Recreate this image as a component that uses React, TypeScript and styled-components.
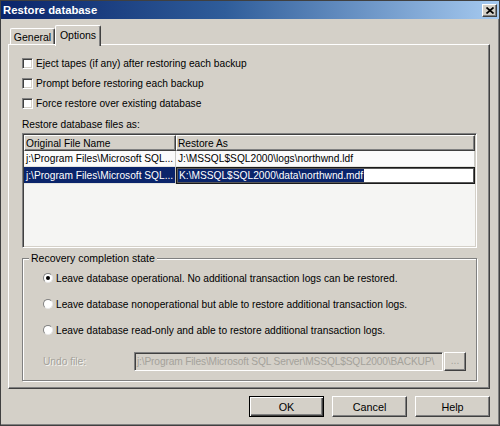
import React from "react";
import styled, { createGlobalStyle } from "styled-components";

const Global = createGlobalStyle`
  html, body { margin: 0; padding: 0; background: #d4d0c8; }
  body {
    font-family: "Liberation Sans", Arial, sans-serif;
    font-size: 10.2px;
    color: #000;
  }
  * { box-sizing: border-box; }
`;

const Window = styled.div`
  width: 500px;
  height: 426px;
  background: #d4d0c8;
  border: 1px solid #404040;
  box-shadow: inset -1px -1px #808080;
  display: flex;
  flex-direction: column;
  overflow: hidden;
`;

const TitleBar = styled.div`
  height: 18px;
  flex: 0 0 18px;
  background: linear-gradient(to right, #0a246a 0%, #2f5d9a 45%, #a6caf0 100%);
  display: flex;
  align-items: center;
  justify-content: space-between;
  padding: 0 2px 0 2px;
  color: #fff;
  font-weight: bold;
  font-size: 11.3px;
`;

const CloseButton = styled.div`
  width: 15px;
  height: 13px;
  background: #d4d0c8;
  border: 1px solid;
  border-color: #fff #404040 #404040 #fff;
  box-shadow: inset -1px -1px #808080;
  display: flex;
  align-items: center;
  justify-content: center;
`;

const TabStrip = styled.div`
  height: 25px;
  flex: 0 0 25px;
  display: flex;
  align-items: flex-end;
  margin: 0 9px 0 7px;
  padding-left: 2px;
`;

const Tab = styled.div<{ $active?: boolean }>`
  position: relative;
  z-index: ${(p) => (p.$active ? 1 : 0)};
  width: ${(p) => (p.$active ? 46 : 45)}px;
  height: ${(p) => (p.$active ? 21 : 16)}px;
  margin-bottom: ${(p) => (p.$active ? -2 : 0)}px;
  padding-bottom: ${(p) => (p.$active ? 3 : 0)}px;
  background: #d4d0c8;
  border-top: 1px solid #fff;
  border-left: 1px solid #fff;
  border-right: 1px solid #404040;
  box-shadow: inset -1px 0 #808080;
  border-radius: 2px 2px 0 0;
  display: flex;
  align-items: center;
  justify-content: center;
  font-size: 10.5px;
`;

const Panel = styled.div`
  flex: 0 0 345px;
  height: 345px;
  margin: 0 9px 0 7px;
  border: 1px solid;
  border-color: #fff #404040 #404040 #fff;
  box-shadow: inset -1px -1px #808080;
  padding: 8px 12px 0 13px;
  display: flex;
  flex-direction: column;
`;

const CheckRow = styled.label`
  height: 20px;
  display: flex;
  align-items: center;
  gap: 3px;
`;

const CheckBox = styled.span`
  width: 11px;
  height: 11px;
  flex: 0 0 11px;
  background: #fff;
  border: 1px solid;
  border-color: #808080 #fff #fff #808080;
  box-shadow: inset 1px 1px #404040, inset -1px -1px #d4d0c8;
`;

const SectionLabel = styled.div`
  height: 14px;
  line-height: 14px;
  margin-top: 5px;
`;

const Grid = styled.div`
  margin-top: 1px;
  height: 115px;
  flex: 0 0 115px;
  border: 1px solid;
  border-color: #808080 #fff #fff #808080;
  box-shadow: inset 1px 1px #404040, inset -1px -1px #d4d0c8;
  padding: 1px;
  background: #f5f5f3;
  display: flex;
  flex-direction: column;
  overflow: hidden;
`;

const GridRow = styled.div<{ $h: number }>`
  display: grid;
  grid-template-columns: 152px 1fr;
  height: ${(p) => p.$h}px;
  flex: 0 0 ${(p) => p.$h}px;
`;

const HeaderCell = styled.div`
  background: #d4d0c8;
  border: 1px solid;
  border-color: #fff #404040 #404040 #fff;
  box-shadow: inset -1px -1px #808080;
  display: flex;
  align-items: center;
  padding-left: 1px;
  white-space: nowrap;
  overflow: hidden;
`;

const BodyCell = styled.div<{ $selected?: boolean }>`
  background: ${(p) => (p.$selected ? "#0a246a" : "#fbfbfb")};
  color: ${(p) => (p.$selected ? "#fff" : "#000")};
  border-right: 1px solid #c8c8c4;
  border-bottom: 1px solid #e4e4e0;
  display: flex;
  align-items: center;
  padding-left: 2px;
  white-space: nowrap;
  overflow: hidden;
`;

const EditCell = styled.div`
  background: #fff;
  border: 1px solid #1a1a1a;
  box-shadow: inset 0 0 0 1px #5a5a5a;
  display: flex;
  align-items: center;
  padding-left: 1px;
  white-space: nowrap;
  overflow: hidden;
`;

const Selected = styled.span`
  background: #0a246a;
  color: #fff;
  padding: 1px;
`;

const Group = styled.fieldset`
  margin: 3px 0 0 0;
  padding: 0 0 9px 20px;
  min-inline-size: 0;
  border: 1px solid #808080;
  box-shadow: 1px 1px 0 #fff, inset 1px 1px 0 #fff;
  display: flex;
  flex-direction: column;
`;

const Legend = styled.legend`
  margin-left: -14px;
  padding: 0 2px;
  height: 14px;
  line-height: 14px;
  background: #d4d0c8;
  font-size: 10.5px;
`;

const RadioRow = styled.label`
  height: 26px;
  display: flex;
  align-items: center;
  gap: 3px;
`;

const Radio = styled.span`
  width: 10px;
  height: 10px;
  flex: 0 0 10px;
  border-radius: 50%;
  background: #fff;
  border: 1px solid;
  border-color: #808080 #e8e8e8 #e8e8e8 #808080;
  display: flex;
  align-items: center;
  justify-content: center;
`;

const Dot = styled.span`
  width: 4px;
  height: 4px;
  border-radius: 50%;
  background: #000;
`;

const UndoRow = styled.div`
  margin-top: 9px;
  height: 19px;
  display: flex;
  align-items: center;
`;

const DisabledLabel = styled.span`
  width: 91px;
  flex: 0 0 91px;
  color: #a4a29b;
  text-shadow: 1px 1px 0 #f4f4f2;
`;

const DisabledInput = styled.div`
  width: 309px;
  height: 19px;
  flex: 0 0 309px;
  background: #d4d0c8;
  border: 1px solid;
  border-color: #808080 #fff #fff #808080;
  box-shadow: inset 1px 1px #404040, inset -1px -1px #d4d0c8;
  color: #a4a29b;
  padding-left: 2px;
  letter-spacing: -0.15px;
  display: flex;
  align-items: center;
  white-space: nowrap;
  overflow: hidden;
`;

const SmallButton = styled.div`
  width: 22px;
  height: 19px;
  margin-left: 1px;
  background: #d4d0c8;
  border: 1px solid;
  border-color: #fff #404040 #404040 #fff;
  box-shadow: inset -1px -1px #808080;
  color: #a4a29b;
  display: flex;
  align-items: center;
  justify-content: center;
  padding-bottom: 3px;
`;

const ButtonRow = styled.div`
  display: flex;
  justify-content: flex-end;
  gap: 8px;
  margin: 7px 9px 0 0;
`;

const Button = styled.button<{ $default?: boolean }>`
  width: 75px;
  height: 21px;
  font: inherit;
  font-size: 10.8px;
  color: #000;
  background: #d4d0c8;
  padding: 0;
  border: 1px solid;
  border-color: ${(p) => (p.$default ? "#000" : "#fff #404040 #404040 #fff")};
  box-shadow: ${(p) =>
    p.$default
      ? "inset 1px 1px #fff, inset -1px -1px #404040, inset -2px -2px #808080"
      : "inset -1px -1px #808080"};
`;

export default function App() {
  return (
    <>
      <Global />
      <Window>
        <TitleBar>
          <span>Restore database</span>
          <CloseButton>
            <svg width="8" height="7" viewBox="0 0 8 7">
              <path d="M0.5 0.5 L7.5 6.5 M7.5 0.5 L0.5 6.5" stroke="#000" strokeWidth="1.7" fill="none" />
            </svg>
          </CloseButton>
        </TitleBar>
        <TabStrip>
          <Tab>General</Tab>
          <Tab $active>Options</Tab>
        </TabStrip>
        <Panel>
          <CheckRow>
            <CheckBox />
            Eject tapes (if any) after restoring each backup
          </CheckRow>
          <CheckRow>
            <CheckBox />
            Prompt before restoring each backup
          </CheckRow>
          <CheckRow>
            <CheckBox />
            Force restore over existing database
          </CheckRow>
          <SectionLabel>Restore database files as:</SectionLabel>
          <Grid>
            <GridRow $h={16}>
              <HeaderCell>Original File Name</HeaderCell>
              <HeaderCell>Restore As</HeaderCell>
            </GridRow>
            <GridRow $h={16}>
              <BodyCell>j:\Program Files\Microsoft SQL...</BodyCell>
              <BodyCell>J:\MSSQL$SQL2000\logs\northwnd.ldf</BodyCell>
            </GridRow>
            <GridRow $h={17}>
              <BodyCell $selected>j:\Program Files\Microsoft SQL...</BodyCell>
              <EditCell>
                <Selected>K:\MSSQL$SQL2000\data\northwnd.mdf</Selected>
              </EditCell>
            </GridRow>
          </Grid>
          <Group>
            <Legend>Recovery completion state</Legend>
            <RadioRow>
              <Radio>
                <Dot />
              </Radio>
              Leave database operational. No additional transaction logs can be restored.
            </RadioRow>
            <RadioRow>
              <Radio />
              Leave database nonoperational but able to restore additional transaction logs.
            </RadioRow>
            <RadioRow>
              <Radio />
              Leave database read-only and able to restore additional transaction logs.
            </RadioRow>
            <UndoRow>
              <DisabledLabel>Undo file:</DisabledLabel>
              <DisabledInput>j:\Program Files\Microsoft SQL Server\MSSQL$SQL2000\BACKUP\</DisabledInput>
              <SmallButton>...</SmallButton>
            </UndoRow>
          </Group>
        </Panel>
        <ButtonRow>
          <Button $default>OK</Button>
          <Button>Cancel</Button>
          <Button>Help</Button>
        </ButtonRow>
      </Window>
    </>
  );
}
